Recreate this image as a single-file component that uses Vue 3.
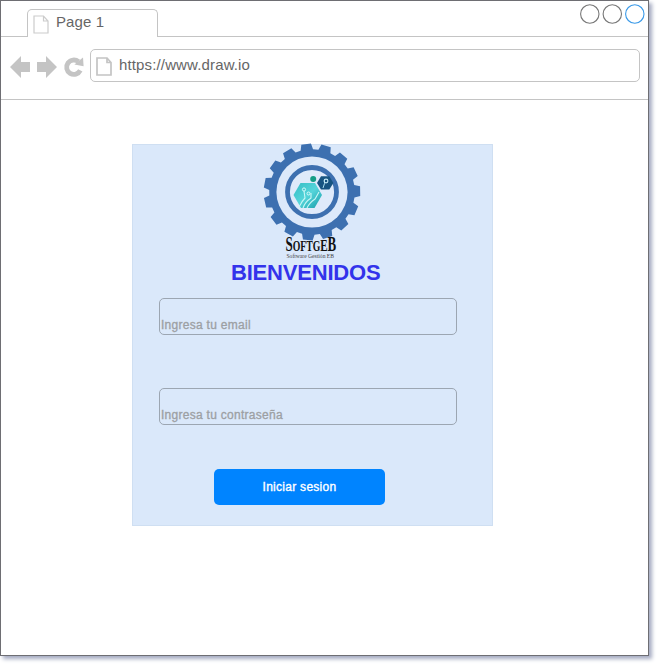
<script setup>
const TEETH = 15
const point = (r, a) => `${(50 + r * Math.sin(a)).toFixed(2)} ${(50 - r * Math.cos(a)).toFixed(2)}`
const gear = (() => {
  const step = (Math.PI * 2) / TEETH
  const pts = []
  for (let i = 0; i < TEETH; i++) {
    const a = i * step - 0.122
    pts.push(point(42.8, a - step * 0.35), point(48.4, a - step * 0.24), point(48.4, a + step * 0.24), point(42.8, a + step * 0.35))
  }
  return 'M' + pts.join('L') + 'Z'
})()
const fields = ['Ingresa tu email', 'Ingresa tu contraseña']
</script>

<template>
  <div class="canvas">
    <div class="window">
      <header class="tabs">
        <div class="tab">
          <svg class="tab-page" width="16" height="19" viewBox="0 0 16 19">
            <path d="M1 1H10.5L15 6V18H1ZM10.5 1V6H15" />
          </svg>
          <span>Page 1</span>
        </div>
        <svg class="controls" width="66" height="22" viewBox="0 0 66 22">
          <circle cx="10.8" cy="11" r="9.2" />
          <circle cx="33.3" cy="11" r="9.2" />
          <circle class="active" cx="55.8" cy="11" r="9.2" />
        </svg>
      </header>
      <nav class="toolbar">
        <svg class="nav-icons" width="76" height="24" viewBox="0 0 76 24">
          <path d="M1 12L12 1V7H21V17H12V23Z" />
          <path d="M48 12L37 1V7H28V17H37V23Z" />
          <path class="reload" d="M71.3 15.4A7.2 7.2 0 1 1 69.5 6.7" />
          <path d="M74 2.5L74.6 11.3L65.4 9.6Z" />
        </svg>
        <div class="address">
          <svg class="page" width="16" height="19" viewBox="0 0 16 19">
            <path d="M1 1H11L15 5.5V18H1ZM11 1V5.5H15" />
          </svg>
          <span>https://www.draw.io</span>
        </div>
      </nav>
      <main class="content">
        <section class="card">
          <svg class="logo" width="100" height="117" viewBox="0 0 100 117">
            <defs>
              <linearGradient id="teal" x1="0" y1="0" x2="1" y2="1">
                <stop offset="0" stop-color="#35bcc4" />
                <stop offset=".5" stop-color="#55d5da" />
                <stop offset="1" stop-color="#179ca9" />
              </linearGradient>
            </defs>
            <path :d="gear" fill="#3d70b0" />
            <circle cx="50" cy="50" r="35.6" fill="#dce9fa" />
            <circle cx="50" cy="50" r="24.5" fill="#dfeafa" stroke="#3d70b0" stroke-width="4.8" />
            <path d="M38.5 41H53L60 53L52.5 66H39L31.5 53Z" fill="url(#teal)" />
            <path d="M37 65Q40 59 43 56L42 49M41 66Q43 60 49 56V51M45 66Q48 60 53 57L57 50" fill="none" stroke="#c9f6f5" stroke-width="1.1" />
            <circle cx="42" cy="47.5" r="1.6" fill="none" stroke="#d6fafa" />
            <circle cx="46.5" cy="51.5" r="1.5" fill="none" stroke="#d6fafa" />
            <path d="M59 34.3H67.3L71.4 41L67.3 47.5H59L55 41Z" fill="#175481" />
            <path d="M61 46L62.5 41.5V38" fill="none" stroke="#a8ddf0" />
            <circle cx="64" cy="39" r="1.9" fill="none" stroke="#c5e9f5" stroke-width="1.1" />
            <circle cx="51.2" cy="37" r="3" fill="#159d86" />
            <text class="brand" transform="translate(23.4 109.2) scale(.65 1)"><tspan font-size="20">S</tspan><tspan font-size="15">OFTG</tspan><tspan font-size="17">E</tspan><tspan font-size="20">B</tspan></text>
            <text class="tagline" x="24.5" y="116" textLength="47.5" lengthAdjust="spacingAndGlyphs">Software Gestión EB</text>
          </svg>
          <h1>BIENVENIDOS</h1>
          <div v-for="field in fields" :key="field" class="field">{{ field }}</div>
          <button>Iniciar sesion</button>
        </section>
      </main>
    </div>
  </div>
</template>

<style>
body {
  background: #fff;
}
</style>

<style scoped>
.canvas {
  height: 666px;
  overflow: hidden;
}
.window {
  box-sizing: border-box;
  width: 649px;
  height: 656px;
  border: 1px solid #6e6e73;
  background: #fff;
  box-shadow: 3px 3px 4px #a5abc2;
  font-family: "Liberation Sans", Arial, sans-serif;
}
.tabs {
  box-sizing: border-box;
  height: 36px;
  padding: 8px 3px 0 26px;
  border-bottom: 1px solid #c4c4c4;
  display: flex;
  justify-content: space-between;
}
.tab {
  box-sizing: border-box;
  width: 131px;
  height: 28px;
  padding: 4px 0 0 5px;
  border: 1px solid #c4c4c4;
  border-bottom: 0;
  border-radius: 5px 5px 0 0;
  background: #fff;
  display: flex;
  gap: 7px;
  color: #666;
  font-size: 15px;
  line-height: 15px;
  letter-spacing: 0.1px;
}
.tab-page {
  margin-top: 1px;
  fill: none;
  stroke: #ccc;
  stroke-width: 1.2;
}
.controls {
  margin-top: -6px;
  fill: none;
  stroke: #777;
  stroke-width: 1.1;
}
.active {
  stroke: #3999e8;
}
.toolbar {
  box-sizing: border-box;
  height: 63px;
  padding: 12px 8px 0;
  border-bottom: 1px solid #c4c4c4;
  display: flex;
  gap: 5px;
}
.nav-icons {
  margin-top: 6px;
  flex: none;
  fill: #c4c4c4;
}
.reload {
  fill: none;
  stroke: #c4c4c4;
  stroke-width: 4.8;
}
.address {
  box-sizing: border-box;
  flex: 1;
  height: 33px;
  padding: 7px 5px;
  border: 1px solid #c4c4c4;
  border-radius: 5px;
  display: flex;
  gap: 7px;
  color: #666;
  font-size: 15px;
  line-height: 15px;
  letter-spacing: 0.14px;
}
.page {
  fill: none;
  stroke: #c4c4c4;
  stroke-width: 1.7;
}
.content {
  display: flex;
  padding: 44px 0 0 131px;
}
.card {
  box-sizing: border-box;
  width: 361px;
  height: 382px;
  border: 1px solid #cfdff2;
  background: #dae8fa;
  display: flex;
  flex-direction: column;
}
.logo {
  margin: -3px 0 0 129px;
}
.brand {
  font-family: "Liberation Serif", serif;
  font-weight: bold;
  fill: #111;
}
.tagline {
  font-family: "Liberation Serif", serif;
  font-size: 6px;
  fill: #444;
}
h1 {
  margin: 2px 0 13px 98px;
  color: #3333eb;
  font-size: 22px;
  line-height: 24px;
  letter-spacing: -0.2px;
}
.field {
  box-sizing: border-box;
  width: 298px;
  height: 37px;
  margin: 0 0 53px 26px;
  padding: 18px 0 0 1px;
  border: 1px solid #9ca6b2;
  border-radius: 5px;
  color: #9c9fa3;
  font-size: 12px;
  line-height: 16px;
  letter-spacing: 0.28px;
  -webkit-text-stroke: 0.3px #9c9fa3;
}
button {
  width: 171px;
  height: 36px;
  margin: -9px 0 0 81px;
  padding: 0;
  border: 0;
  border-radius: 5px;
  background: #0084ff;
  color: #fff;
  font-family: inherit;
  font-size: 12px;
  letter-spacing: 0.28px;
  -webkit-text-stroke: 0.35px #fff;
}
</style>
